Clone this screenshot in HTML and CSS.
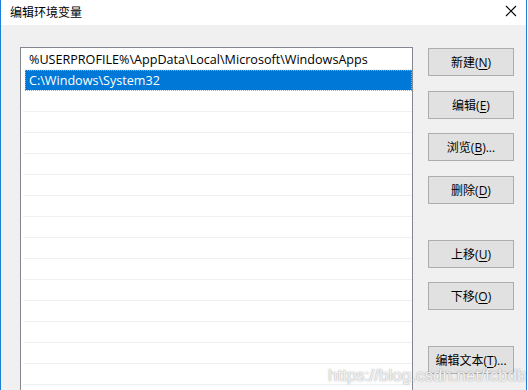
FILE: index.html
```html
<!DOCTYPE html>
<html lang="zh-CN">
<head>
  <meta charset="UTF-8" />
  <title>编辑环境变量</title>
  <link rel="stylesheet" href="styles.css">
</head>
<body>
  <div class="window">
    <!-- Title bar -->
    <div class="titlebar">
      <span class="title">编辑环境变量</span>
      <svg class="close" width="12" height="12" viewBox="0 0 12 12">
        <path d="M1 1 L11 11 M11 1 L1 11" stroke="#000" stroke-width="1.1" fill="none" />
      </svg>
    </div>

    <div class="content">
      <!-- Path list -->
      <div class="listbox">
        <div class="row">%USERPROFILE%\AppData\Local\Microsoft\WindowsApps</div>
        <div class="row selected">C:\Windows\System32</div>
        <div class="row"></div>
        <div class="row"></div>
        <div class="row"></div>
        <div class="row"></div>
        <div class="row"></div>
        <div class="row"></div>
        <div class="row"></div>
        <div class="row"></div>
        <div class="row"></div>
        <div class="row"></div>
        <div class="row"></div>
        <div class="row"></div>
        <div class="row"></div>
        <div class="row"></div>
      </div>

      <!-- Buttons -->
      <div class="buttons">
        <button class="btn">新建(<u>N</u>)</button>
        <button class="btn tight">编辑(<u>E</u>)</button>
        <button class="btn">浏览(<u>B</u>)...</button>
        <button class="btn">删除(<u>D</u>)</button>
        <button class="btn group tight">上移(<u>U</u>)</button>
        <button class="btn">下移(<u>O</u>)</button>
        <button class="btn group">编辑文本(<u>T</u>)...</button>
      </div>
    </div>

    <span class="watermark">https://blog.csdn.net/fcbdbd</span>
  </div>
</body>
</html>
```

FILE: styles.css
```css
html, body {
  margin: 0;
  padding: 0;
  height: 100%;
  overflow: hidden;
}

body {
  font-family: "Open Sans", "Noto Sans CJK SC", sans-serif;
  font-size: 12px;
  color: #000;
  background: #ffffff;
}

.window {
  position: relative;
  width: 525px;
  height: 390px;
  border-left: 1px solid #1c7fd6;
  border-right: 1px solid #1c7fd6;
  background: #f0f0f0;
  overflow: hidden;
}

.titlebar {
  height: 25px;
  background: #ffffff;
  display: flex;
  align-items: center;
  justify-content: space-between;
  padding: 0 9px 0 9px;
}

.title {
  font-family: "Noto Sans CJK SC", sans-serif;
  font-size: 12px;
  margin-top: -3px;
}

.close {
  margin-top: -3px;
}

.content {
  display: flex;
  align-items: flex-start;
  padding: 22px 0 0 19px;
}

.listbox {
  width: 390px;
  height: 360px;
  border: 1px solid #828790;
  background: #ffffff;
  padding: 1px 0 0 1px;
  box-sizing: content-box;
}

.row {
  height: 19px;
  line-height: 19px;
  padding-top: 1px;
  border-bottom: 1px solid #f0f0f0;
  margin-left: 1px;
  padding-left: 6px;
  font-size: 12.6px;
  white-space: nowrap;
}

.row.selected {
  background: #0078d7;
  color: #ffffff;
  margin-left: 3px;
  padding-left: 4px;
  border-bottom-color: #ffffff;
  outline: 1px dotted #e89a3c;
  outline-offset: -1px;
}

.buttons {
  display: flex;
  flex-direction: column;
  margin-left: 15px;
  margin-top: 1px;
}

.btn {
  width: 86px;
  height: 28px;
  margin-bottom: 15px;
  padding: 0;
  background: #e1e1e1;
  border: 1px solid #adadad;
  font-family: "Open Sans", "Noto Sans CJK SC", sans-serif;
  font-size: 12px;
  color: #000;
}

.btn u {
  text-underline-offset: 2px;
}

.btn.tight {
  margin-bottom: 14px;
}

.btn.group {
  margin-top: 21px;
}

.watermark {
  position: absolute;
  left: 327px;
  top: 366px;
  font-family: "Liberation Sans", sans-serif;
  font-size: 17px;
  color: rgba(255, 255, 255, 0.85);
  text-shadow: 0 0 1px rgba(120, 120, 120, 0.6), 0 0 2px rgba(150, 150, 150, 0.5);
}
```
